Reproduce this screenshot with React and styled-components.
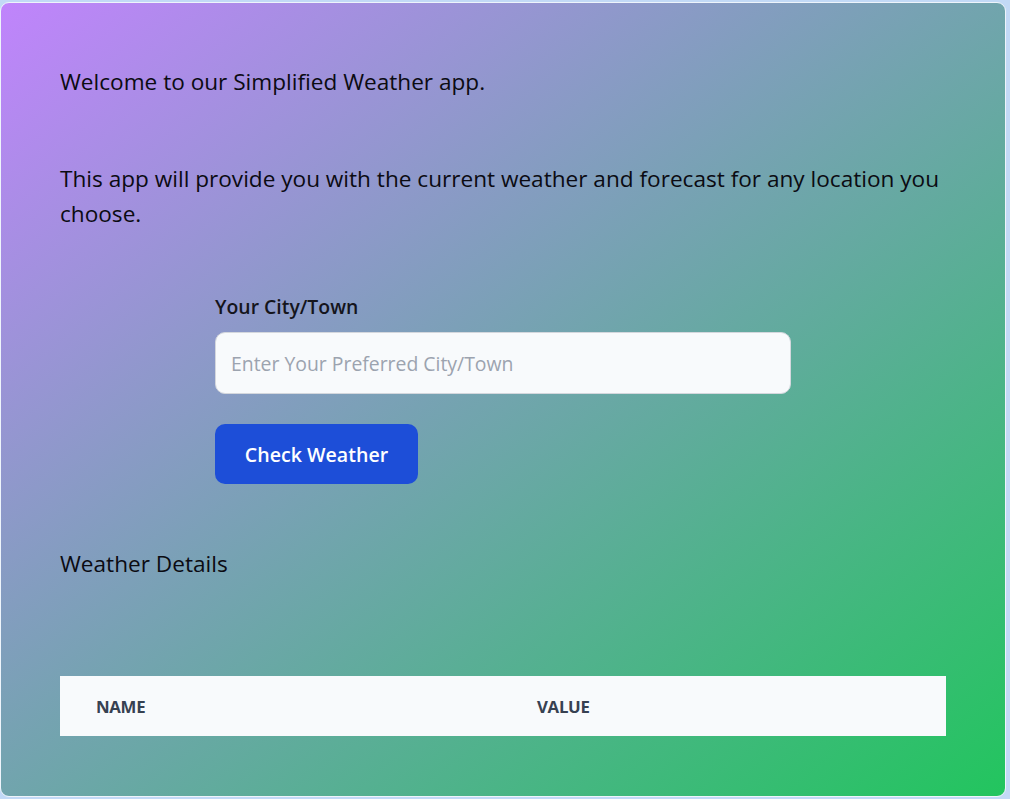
import React from "react";
import styled, { createGlobalStyle } from "styled-components";

const Global = createGlobalStyle`
  html, body { margin: 0; padding: 0; background: #c2d9f6; }
  body { font-family: "Open Sans", "Noto Sans", sans-serif; }
  * { box-sizing: border-box; }
`;

const Card = styled.main`
  margin-top: 2px;
  width: 1006px;
  height: 795px;
  border: 1px solid #eef4fb;
  border-radius: 9px;
  background: linear-gradient(to bottom right, #c084fc, #22c55e);
  padding: 61px 59px 0;
`;

const Text = styled.p`
  margin: ${(p) => p.$top || 0}px 0 ${(p) => p.$gap || 0}px;
  font-size: 22.6px;
  line-height: 35px;
  color: #0b0b12;
`;

const Form = styled.form`
  width: 576px;
  margin: 0 auto;
  display: flex;
  flex-direction: column;
  align-items: flex-start;
`;

const Label = styled.label`
  font-size: 19.4px;
  font-weight: 600;
  line-height: 28px;
  color: #15151c;
  margin-bottom: 11px;
`;

const Input = styled.input`
  width: 576px;
  height: 62px;
  border: 1px solid #d4d7dd;
  border-radius: 10px;
  background: #f8fafc;
  padding: 0 15px;
  font-family: inherit;
  font-size: 19.4px;
  color: #111;
  outline: none;
  &::placeholder { color: #9ca3af; }
`;

const Button = styled.button`
  margin-top: 30px;
  width: 203px;
  height: 60px;
  border: none;
  border-radius: 10px;
  background: #1d4ed8;
  color: #fff;
  font-family: inherit;
  font-size: 19.6px;
  font-weight: 600;
  cursor: pointer;
`;

const Table = styled.div`
  margin-top: 95px;
  display: grid;
  grid-template-columns: 441px 1fr;
  height: 60px;
  background: #f8fafc;
  align-items: center;
`;

const Th = styled.div`
  padding-left: 36px;
  font-size: 16.8px;
  font-weight: 700;
  color: #374151;
  text-transform: uppercase;
  letter-spacing: -0.3px;
`;

export default function App() {
  return (
    <>
      <Global />
      <Card>
        <Text $gap={62}>Welcome to our Simplified Weather app.</Text>
        <Text $gap={62}>
          This app will provide you with the current weather and forecast for any location you choose.
        </Text>
        <Form onSubmit={(e) => e.preventDefault()}>
          <Label htmlFor="city">Your City/Town</Label>
          <Input id="city" placeholder="Enter Your Preferred City/Town" />
          <Button type="submit">Check Weather</Button>
        </Form>
        <Text $top={62}>Weather Details</Text>
        <Table>
          <Th>Name</Th>
          <Th>Value</Th>
        </Table>
      </Card>
    </>
  );
}
